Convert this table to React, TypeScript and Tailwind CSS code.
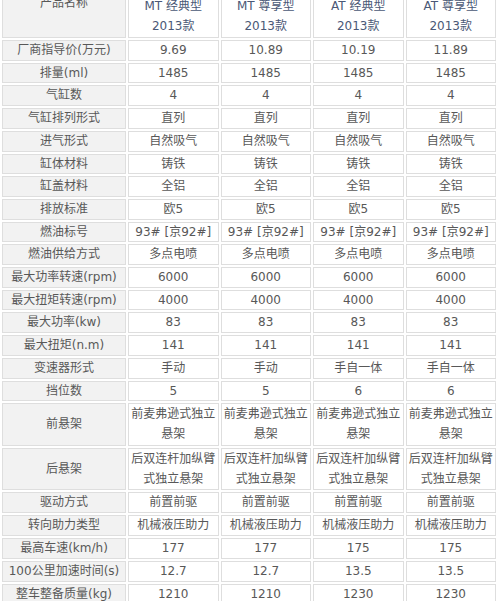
import React from "react";

type Row = { label: string; values: string[]; multi?: boolean; tall?: boolean };

const rows: Row[] = [
  { label: "厂商指导价(万元)", values: ["9.69", "10.89", "10.19", "11.89"] },
  { label: "排量(ml)", values: ["1485", "1485", "1485", "1485"] },
  { label: "气缸数", values: ["4", "4", "4", "4"] },
  { label: "气缸排列形式", values: ["直列", "直列", "直列", "直列"] },
  { label: "进气形式", values: ["自然吸气", "自然吸气", "自然吸气", "自然吸气"] },
  { label: "缸体材料", values: ["铸铁", "铸铁", "铸铁", "铸铁"] },
  { label: "缸盖材料", values: ["全铝", "全铝", "全铝", "全铝"] },
  { label: "排放标准", values: ["欧5", "欧5", "欧5", "欧5"] },
  { label: "燃油标号", values: ["93# [京92#]", "93# [京92#]", "93# [京92#]", "93# [京92#]"] },
  { label: "燃油供给方式", values: ["多点电喷", "多点电喷", "多点电喷", "多点电喷"] },
  { label: "最大功率转速(rpm)", values: ["6000", "6000", "6000", "6000"] },
  { label: "最大扭矩转速(rpm)", values: ["4000", "4000", "4000", "4000"] },
  { label: "最大功率(kw)", values: ["83", "83", "83", "83"] },
  { label: "最大扭矩(n.m)", values: ["141", "141", "141", "141"] },
  { label: "变速器形式", values: ["手动", "手动", "手自一体", "手自一体"] },
  { label: "挡位数", values: ["5", "5", "6", "6"] },
  { label: "前悬架", values: ["前麦弗逊式独立|悬架", "前麦弗逊式独立|悬架", "前麦弗逊式独立|悬架", "前麦弗逊式独立|悬架"], multi: true },
  { label: "后悬架", values: ["后双连杆加纵臂|式独立悬架", "后双连杆加纵臂|式独立悬架", "后双连杆加纵臂|式独立悬架", "后双连杆加纵臂|式独立悬架"], multi: true },
  { label: "驱动方式", values: ["前置前驱", "前置前驱", "前置前驱", "前置前驱"], tall: true },
  { label: "转向助力类型", values: ["机械液压助力", "机械液压助力", "机械液压助力", "机械液压助力"], tall: true },
  { label: "最高车速(km/h)", values: ["177", "177", "175", "175"], tall: true },
  { label: "100公里加速时间(s)", values: ["12.7", "12.7", "13.5", "13.5"], tall: true },
  { label: "整车整备质量(kg)", values: ["1210", "1210", "1230", "1230"], tall: true },
];

const headers = [
  ["MT 经典型", "2013款"],
  ["MT 尊享型", "2013款"],
  ["AT 经典型", "2013款"],
  ["AT 尊享型", "2013款"],
];

function lead(r: Row) {
  if (r.multi) return "leading-[20.2px]";
  if (r.tall) return "leading-[18.9px]";
  return "leading-[18.7px]";
}

export default function App() {
  return (
    <div
      className="w-[500px] bg-white text-[12px] font-normal text-[#585858] overflow-hidden"
      style={{ fontFamily: '"DejaVu Sans", "Noto Sans CJK SC", sans-serif' }}
    >
      <table className="mt-[-26px] w-[498px] table-fixed border-separate border-spacing-[2px]">
        <colgroup>
          <col className="w-[124px]" />
          <col />
          <col />
          <col />
          <col />
        </colgroup>
        <tbody>
          <tr>
            <td className="h-[62px] border border-[#dedede] bg-[#f2f2f2] pt-[16px] text-center align-top leading-[20px]">
              产品名称
            </td>
            {headers.map((h, i) => (
              <td
                key={i}
                className="h-[62px] border border-[#dedede] bg-white pb-[1px] text-center align-bottom leading-[20px] text-[#4a5876]"
              >
                <div>{h[0]}</div>
                <div>{h[1]}</div>
              </td>
            ))}
          </tr>
          {rows.map((r, ri) => (
            <tr key={ri}>
              <td
                className={`border border-[#dedede] bg-[#f2f2f2] p-0 text-center align-middle whitespace-nowrap ${lead(r)}`}
              >
                {r.label}
              </td>
              {r.values.map((v, vi) => (
                <td
                  key={vi}
                  className={`border border-[#dedede] bg-white p-0 text-center align-middle whitespace-nowrap ${lead(r)}`}
                >
                  {v.split("|").map((line, li) => (
                    <div key={li}>{line}</div>
                  ))}
                </td>
              ))}
            </tr>
          ))}
        </tbody>
      </table>
    </div>
  );
}
